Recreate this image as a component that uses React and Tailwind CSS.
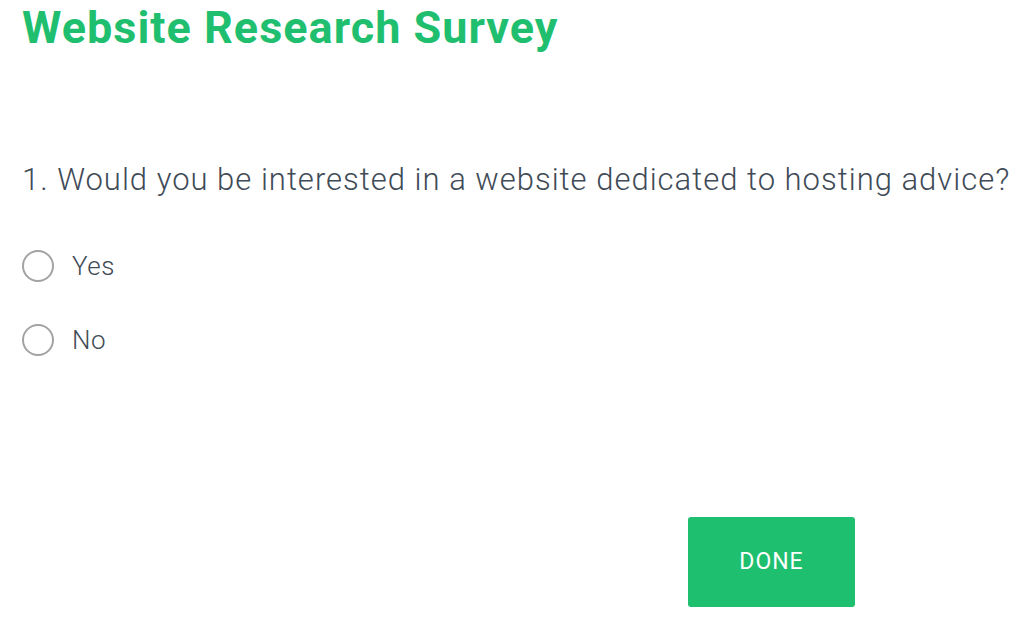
import React, { useState } from 'react';

const options = ['Yes', 'No'];

const App = () => {
  const [answer, setAnswer] = useState(null);

  return (
    <div className="w-[1024px] h-[625px] bg-white overflow-hidden pl-[22px] font-['Roboto',sans-serif]">
      <h1 className="pt-[2px] text-[45px] leading-[52px] font-bold tracking-[1px] text-[#1fbf6f]">
        Website Research Survey
      </h1>

      <p className="mt-[106px] text-[31px] leading-[40px] font-light tracking-[1px] text-[#3f4b57]">
        1. Would you be interested in a website dedicated to hosting advice?
      </p>

      <div className="mt-[50px] flex flex-col gap-[42px]">
        {options.map((opt) => (
          <label key={opt} className="flex items-center gap-[18px] cursor-pointer">
            <span
              onClick={() => setAnswer(opt)}
              className="w-[32px] h-[32px] rounded-full border-2 border-[#a3a3a3] flex items-center justify-center"
            >
              {answer === opt && <span className="w-[16px] h-[16px] rounded-full bg-[#1fbf6f]" />}
            </span>
            <span className="text-[26px] leading-[32px] font-light tracking-[0.5px] text-[#3f4b57]">{opt}</span>
          </label>
        ))}
      </div>

      <div className="mt-[161px] pl-[666px]">
        <button className="w-[167px] h-[90px] rounded-[3px] bg-[#1fbf70] text-white text-[23px] tracking-[1px] font-normal">
          DONE
        </button>
      </div>
    </div>
  );
};

export default App;
